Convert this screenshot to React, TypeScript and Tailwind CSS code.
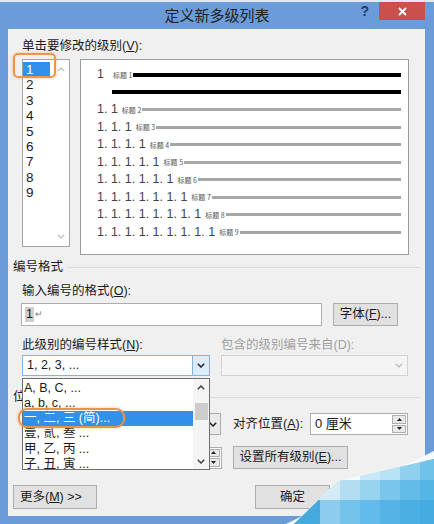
import React from "react";

const levels = [1, 2, 3, 4, 5, 6, 7, 8, 9];
const styles = [
  "A, B, C, ...",
  "a, b, c, ...",
  "一, 二, 三 (简)...",
  "壹, 贰, 叁 ...",
  "甲, 乙, 丙 ...",
  "子, 丑, 寅 ...",
];

function Chevron({ up, color = "#222" }: { up?: boolean; color?: string }) {
  return (
    <svg width="8" height="5" viewBox="0 0 8 5">
      <path
        d={up ? "M0.8 4.2L4 1L7.2 4.2" : "M0.8 0.8L4 4L7.2 0.8"}
        fill="none"
        stroke={color}
        strokeWidth="1.5"
      />
    </svg>
  );
}

function Tri({ up }: { up?: boolean }) {
  return (
    <svg width="5" height="3" viewBox="0 0 5 3">
      <path d={up ? "M0 3L2.5 0L5 3Z" : "M0 0L2.5 3L5 0Z"} fill="#222" />
    </svg>
  );
}

function Spinner() {
  return (
    <div className="flex w-[15px] flex-col gap-[1px] py-[1px] pr-[1px]">
      <div className="flex flex-1 items-center justify-center border border-[#adadad] bg-[#e9e9e9]">
        <Tri up />
      </div>
      <div className="flex flex-1 items-center justify-center border border-[#adadad] bg-[#e9e9e9]">
        <Tri />
      </div>
    </div>
  );
}

function Btn({ children, className }: { children: React.ReactNode; className: string }) {
  return (
    <div className={`flex items-center justify-center border border-[#adadad] bg-[#e1e1e1] ${className}`}>
      {children}
    </div>
  );
}

function Watermark() {
  const blocks: [number, number, number, number, string][] = [
    [80, 0, 20, 40, "#c8e8f7"],
    [100, 0, 20, 40, "#b8e2f5"],
    [120, 0, 20, 40, "#8fd0ee"],
    [140, 0, 14, 40, "#6fc2ea"],
    [0, 40, 40, 20, "#d8eef9"],
    [40, 40, 20, 20, "#d3ecf8"],
    [60, 40, 20, 20, "#b2def4"],
    [80, 40, 20, 20, "#98d3f0"],
    [100, 40, 20, 20, "#7ac6eb"],
    [120, 40, 20, 20, "#63bce8"],
    [140, 40, 14, 20, "#55b5e5"],
    [0, 60, 40, 24, "#45a9de"],
    [40, 60, 20, 24, "#8ccdee"],
    [60, 60, 20, 24, "#74c3eb"],
    [80, 60, 20, 24, "#62bbe8"],
    [100, 60, 20, 24, "#55b4e5"],
    [120, 60, 20, 24, "#4cafe3"],
    [140, 60, 14, 24, "#46abe1"],
  ];
  return (
    <svg
      className="pointer-events-none absolute left-[280px] top-[440px] z-30"
      width="154"
      height="84"
      viewBox="0 0 154 84"
    >
      <defs>
        <clipPath id="wm">
          <polygon points="14,84 58,41 154,19 154,84" />
        </clipPath>
      </defs>
      <polygon points="6,84 154,11 154,19 58,41 14,84" fill="#f7fafc" />
      <g clipPath="url(#wm)">
        {blocks.map(([x, y, w, h, c], i) => (
          <rect key={i} x={x} y={y} width={w} height={h} fill={c} />
        ))}
      </g>
    </svg>
  );
}

export default function App() {
  return (
    <div className="relative flex h-[524px] w-[434px] flex-col overflow-hidden bg-[#6b9bd8] font-['Liberation_Sans','Noto_Sans_CJK_SC',sans-serif] text-[12.5px] text-[#1a1a1a]">
      {/* title bar */}
      <div className="grid h-[29px] shrink-0 grid-cols-[1fr_auto_1fr] border-t-2 border-[#e3e9f2]">
        <div />
        <div className="pt-[3px] font-['Noto_Sans_CJK_SC',sans-serif] text-[15px] leading-[20px] text-[#222]">
          定义新多级列表
        </div>
        <div className="flex items-start justify-end pr-[9px]">
          <div className="mr-[10px] mt-[1px] text-[14px] font-bold leading-[16px] text-[#1d3b6f]">?</div>
          <div className="flex h-[18px] w-[46px] items-center justify-center bg-[#c9504b]">
            <svg width="9" height="9" viewBox="0 0 9 9">
              <path d="M1 1L8 8M8 1L1 8" stroke="#fff" strokeWidth="1.8" />
            </svg>
          </div>
        </div>
      </div>

      {/* client area */}
      <div className="ml-[8px] mr-[9px] flex h-[487px] flex-col bg-[#f0f0f0] px-[5px]">
        <div className="ml-[9px] mt-[9px] leading-[16px]">
          单击要修改的级别(<u>V</u>):
        </div>

        <div className="ml-[9px] mt-[5px] flex">
          {/* level list */}
          <div className="relative flex h-[188px] w-[48px] border border-[#a5a5a5] bg-white">
            <div className="flex flex-1 flex-col pt-[2px] font-['Liberation_Sans',sans-serif] text-[13.5px]">
              {levels.map((n) => (
                <div key={n} className="h-[15.4px] leading-[15.4px]">
                  <span
                    className={
                      n === 1
                        ? "inline-block w-[27px] bg-[#3390e8] pl-[3px] text-white"
                        : "inline-block w-[27px] pl-[3px]"
                    }
                  >
                    {n}
                  </span>
                </div>
              ))}
            </div>
            <div className="flex w-[16px] flex-col items-center justify-between pb-[7px] pt-[7px]">
              <Chevron up color="#c4c4c4" />
              <Chevron color="#c4c4c4" />
            </div>
            <div className="absolute left-[-10px] top-[-7px] h-[25px] w-[43px] rounded-[5px] border-2 border-[#ec9548] shadow-[0_0_3px_rgba(236,149,72,0.6)]" />
          </div>

          {/* preview */}
          <div className="ml-[10px] flex h-[196px] w-[329px] flex-col border border-[#9c9c9c] bg-white pl-[16px] pr-[7px] pt-[6px] font-['Liberation_Sans','Noto_Sans_CJK_SC',sans-serif] text-[#444]">
            {levels.map((n) => (
              <React.Fragment key={n}>
                <div className="flex h-[17.5px] items-center">
                  <span className="whitespace-pre text-[12.5px]">
                    {Array(n).fill("1").join(". ")}
                  </span>
                  <span
                    className={
                      n === 1
                        ? "ml-[9px] font-['Noto_Sans_CJK_SC',sans-serif] text-[7px] text-[#555]"
                        : "ml-[4px] font-['Noto_Sans_CJK_SC',sans-serif] text-[7px] text-[#555]"
                    }
                  >
                    标题 {n}
                  </span>
                  <div
                    className={
                      n === 1
                        ? "ml-[1px] h-[4px] flex-1 bg-black"
                        : "ml-[1px] h-[3px] flex-1 bg-[#a6a6a6]"
                    }
                  />
                </div>
                {n === 1 && (
                  <div className="flex h-[17.5px] items-center pl-[15px]">
                    <div className="h-[4px] flex-1 bg-black" />
                  </div>
                )}
              </React.Fragment>
            ))}
          </div>
        </div>

        {/* 编号格式 */}
        <div className="mt-[4px] flex items-center leading-[16px]">
          <span>编号格式</span>
          <div className="ml-[4px] h-px flex-1 bg-[#dadada]" />
        </div>
        <div className="ml-[9px] mt-[8px] leading-[16px]">
          输入编号的格式(<u>O</u>):
        </div>
        <div className="ml-[8px] mt-[4px] flex h-[23px]">
          <div className="flex w-[301px] items-center border border-[#abadb3] bg-white pl-[3px]">
            <span className="bg-[#cfcfcf] px-[1px] leading-[15px]">1</span>
            <span className="ml-[1px] text-[9px] text-[#777]">↵</span>
          </div>
          <Btn className="ml-[11px] w-[65px]">
            字体(<u>F</u>)...
          </Btn>
        </div>

        <div className="ml-[9px] mt-[11px] flex leading-[16px]">
          <span className="w-[199px]">
            此级别的编号样式(<u>N</u>):
          </span>
          <span className="text-[#a0a0a0]">包含的级别编号来自(D):</span>
        </div>
        <div className="ml-[9px] mt-[2px] flex h-[21px]">
          <div className="relative flex w-[188px] border border-[#7eb4ea] bg-white">
            <div className="flex flex-1 items-center pl-[4px]">1, 2, 3, ...</div>
            <div className="flex w-[17px] items-center justify-center border-l border-[#7eb4ea] bg-[#dcecfc]">
              <Chevron />
            </div>

            {/* open dropdown */}
            <div className="absolute left-[-1px] top-[22px] z-20 flex h-[92px] w-[188px] border border-[#707070] bg-white">
              <div className="flex flex-1 flex-col pt-[1.5px]">
                {styles.map((s, i) => (
                  <div
                    key={s}
                    className={
                      i === 2
                        ? "h-[15.3px] whitespace-pre bg-[#3390e8] pl-[1px] leading-[15.3px] text-white"
                        : "h-[15.3px] whitespace-pre pl-[1px] leading-[15.3px]"
                    }
                  >
                    {s}
                  </div>
                ))}
              </div>
              <div className="flex w-[16px] flex-col items-center bg-[#f4f4f4] pt-[6px]">
                <Chevron up color="#444" />
                <div className="mt-[13px] h-[17px] w-[13px] bg-[#cdcdcd]" />
                <div className="mt-auto pb-[5px]">
                  <Chevron color="#444" />
                </div>
              </div>
              <div className="absolute left-[-5px] top-[29px] h-[20px] w-[107px] rounded-[9px] border-2 border-[#e8924a] shadow-[0_0_3px_rgba(232,146,74,0.6)]" />
            </div>
          </div>
          <div className="ml-[11px] flex w-[187px] items-center justify-end border border-[#d2d2d2] bg-[#f4f4f4] pr-[4px]">
            <Chevron color="#c2c2c2" />
          </div>
        </div>

        {/* 位置 (the open list covers most of the label) */}
        <div className="mt-[13px] flex items-center leading-[16px]">
          <span>位</span>
          <div className="ml-[16px] h-px flex-1 bg-[#dadada]" />
        </div>
        <div className="ml-[9px] mt-[8px] flex h-[22px] items-center">
          {/* numbering alignment select, mostly hidden under the open list */}
          <div className="flex w-[199px] justify-end">
            <div className="flex h-[22px] w-[90px] justify-end border border-[#abadb3] bg-[#e9e9e9]">
              <div className="flex w-[14px] items-center justify-center">
                <Chevron />
              </div>
            </div>
          </div>
          <span className="ml-[12px] w-[77px]">
            对齐位置(<u>A</u>):
          </span>
          <div className="flex h-[22px] w-[98px] border border-[#abadb3] bg-white">
            <div className="flex flex-1 items-center pl-[4px] text-[13px]">0 厘米</div>
            <Spinner />
          </div>
        </div>
        <div className="ml-[9px] mt-[11px] flex h-[23px] items-center">
          {/* text indent spinner, mostly hidden under the open list */}
          <div className="flex w-[200px] justify-end">
            <div className="flex h-[22px] w-[90px] justify-end border border-[#abadb3] bg-white">
              <Spinner />
            </div>
          </div>
          <Btn className="ml-[11px] h-[23px] w-[115px]">
            设置所有级别(<u>E</u>)...
          </Btn>
        </div>

        {/* bottom buttons */}
        <div className="mt-[16px] flex h-[24px]">
          <Btn className="w-[84px] justify-start pl-[6px]">
            更多(<u>M</u>) &gt;&gt;
          </Btn>
          <Btn className="ml-[158px] w-[75px]">确定</Btn>
          <Btn className="ml-[10px] w-[75px]">取消</Btn>
        </div>
      </div>

      <Watermark />
    </div>
  );
}
